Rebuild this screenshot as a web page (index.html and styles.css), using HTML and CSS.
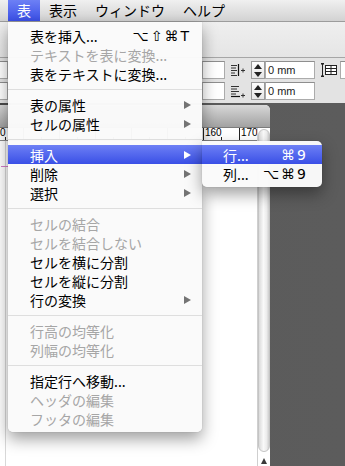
FILE: index.html
```html
<!DOCTYPE html>
<html lang="ja">
<head>
    <meta charset="UTF-8">
    <title>表メニュー</title>
    <link rel="stylesheet" href="styles.css">
</head>
<body>
    <div class="screen">
        <div class="menubar">
            <div class="menubar-item active">表</div>
            <div class="menubar-item">表示</div>
            <div class="menubar-item">ウィンドウ</div>
            <div class="menubar-item">ヘルプ</div>
        </div>

        <div class="toolbar"></div>

        <div class="control-panel">
            <div class="cp-row">
                <div class="field field-cut"></div>
                <div class="field field-small"></div>
                <svg class="cp-icon" width="16" height="14" viewBox="0 0 16 14">
                    <path d="M1 2.5h6M1 5h5M1 7.5h6M1 10h4M1 12.5h6" stroke="#333" stroke-width="1"/>
                    <path d="M8.5 1v12" stroke="#111" stroke-width="1.2"/>
                    <path d="M11 7.5h4M13 5.5v4" stroke="#333" stroke-width="1"/>
                </svg>
                <div class="spinner"><span class="up"></span><span class="down"></span></div>
                <div class="field field-value">0 mm</div>
                <svg class="cp-icon table-icon" width="17" height="16" viewBox="0 0 17 16">
                    <path d="M2.5 1v14M1 1.5h3M1 14.5h3" stroke="#222" stroke-width="1"/>
                    <path d="M1.5 3l1 -1.5l1 1.5M1.5 13l1 1.5l1 -1.5" stroke="#222" stroke-width="0.8" fill="none"/>
                    <rect x="5.5" y="3.5" width="11" height="9" fill="#fff" stroke="#222"/>
                    <path d="M5.5 6.5h11M5.5 9.5h11M11 3.5v9" stroke="#222" stroke-width="1"/>
                </svg>
                <div class="field field-edge"></div>
            </div>
            <div class="cp-row">
                <div class="field field-cut"></div>
                <div class="field field-small"></div>
                <svg class="cp-icon" width="16" height="14" viewBox="0 0 16 14">
                    <path d="M1 2.5h8M1 5h6M1 7.5h8M1 10h5" stroke="#333" stroke-width="1"/>
                    <path d="M1 12.5h9" stroke="#111" stroke-width="1.2"/>
                    <path d="M11 11.5h4M13 9.5v4" stroke="#333" stroke-width="1"/>
                </svg>
                <div class="spinner"><span class="up"></span><span class="down"></span></div>
                <div class="field field-value">0 mm</div>
            </div>
        </div>

        <div class="workspace">
            <div class="doc-window">
                <div class="doc-title"></div>
                <div class="doc-main">
                    <div class="doc-content">
                        <!-- labels 110-150 sit under the open menu -->
                        <div class="ruler">
                            <div class="ruler-cell">100</div>
                            <div class="ruler-cell"></div>
                            <div class="ruler-cell"></div>
                            <div class="ruler-cell"></div>
                            <div class="ruler-cell"></div>
                            <div class="ruler-cell"></div>
                            <div class="ruler-cell">160</div>
                            <div class="ruler-cell">170</div>
                        </div>
                        <div class="page">
                            <div class="guide"></div>
                        </div>
                    </div>
                    <div class="vscroll">
                        <div class="thumb"></div>
                        <div class="arrow-up"></div>
                    </div>
                </div>
            </div>
            <div class="pasteboard"></div>
        </div>

        <!-- 表 menu -->
        <div class="menu main-menu">
            <div class="menu-item"><span class="label">表を挿入...</span><span class="shortcut">⌥⇧⌘T</span></div>
            <div class="menu-item disabled"><span class="label">テキストを表に変換...</span></div>
            <div class="menu-item"><span class="label">表をテキストに変換...</span></div>
            <div class="separator"></div>
            <div class="menu-item"><span class="label">表の属性</span><span class="arrow"></span></div>
            <div class="menu-item"><span class="label">セルの属性</span><span class="arrow"></span></div>
            <div class="separator"></div>
            <div class="menu-item selected"><span class="label">挿入</span><span class="arrow"></span></div>
            <div class="menu-item"><span class="label">削除</span><span class="arrow"></span></div>
            <div class="menu-item"><span class="label">選択</span><span class="arrow"></span></div>
            <div class="separator"></div>
            <div class="menu-item disabled"><span class="label">セルの結合</span></div>
            <div class="menu-item disabled"><span class="label">セルを結合しない</span></div>
            <div class="menu-item"><span class="label">セルを横に分割</span></div>
            <div class="menu-item"><span class="label">セルを縦に分割</span></div>
            <div class="menu-item"><span class="label">行の変換</span><span class="arrow"></span></div>
            <div class="separator"></div>
            <div class="menu-item disabled"><span class="label">行高の均等化</span></div>
            <div class="menu-item disabled"><span class="label">列幅の均等化</span></div>
            <div class="separator"></div>
            <div class="menu-item"><span class="label">指定行へ移動...</span></div>
            <div class="menu-item disabled"><span class="label">ヘッダの編集</span></div>
            <div class="menu-item disabled"><span class="label">フッタの編集</span></div>
        </div>

        <!-- 挿入 submenu -->
        <div class="menu sub-menu">
            <div class="menu-item selected"><span class="label">行...</span><span class="shortcut">⌘9</span></div>
            <div class="menu-item"><span class="label">列...</span><span class="shortcut">⌥⌘9</span></div>
        </div>
    </div>
</body>
</html>
```

FILE: styles.css
```css
* {
    margin: 0;
    padding: 0;
    box-sizing: border-box;
}

body {
    font-family: "Noto Sans CJK JP", "Noto Sans", sans-serif;
    font-size: 14px;
    color: #000;
    background: #5a5a5a;
}

.screen {
    position: relative;
    width: 345px;
    height: 466px;
    overflow: hidden;
    display: flex;
    flex-direction: column;
}

/* menu bar */
.menubar {
    height: 22px;
    display: flex;
    padding-left: 8px;
    background: linear-gradient(#f0f0f0, #d2d2d2);
    border-bottom: 1px solid #9c9c9c;
}

.menubar-item {
    height: 21px;
    line-height: 21px;
    padding: 0 9px;
}

.menubar-item.active {
    background: linear-gradient(#6d80f5, #3a4fe6);
    color: #fff;
}

/* window chrome */
.toolbar {
    height: 35px;
    background: linear-gradient(#efefef, #e5e5e5);
}

.control-panel {
    height: 46px;
    border-top: 1px solid #a6a6a6;
    background: #e3e3e3;
    padding: 3px 0;
    display: flex;
    flex-direction: column;
    gap: 3px;
}

.cp-row {
    height: 18px;
    display: flex;
    align-items: center;
}

.field {
    height: 18px;
    background: #fff;
    border: 1px solid #ababab;
    border-top-color: #8e8e8e;
    font: 11px "Liberation Sans", sans-serif;
    line-height: 16px;
    padding-left: 2px;
    flex: none;
}

.field-cut {
    width: 8px;
    border-left: none;
}

.field-small {
    width: 23px;
    margin-left: 194px;
}

.field-value {
    width: 50px;
    color: #222;
}

.field-edge {
    width: 20px;
    margin-left: 3px;
}

.cp-icon {
    flex: none;
    margin-left: 5px;
}

.spinner {
    width: 14px;
    height: 18px;
    margin-left: 5px;
    flex: none;
    background: linear-gradient(#fdfdfd, #e6e6e6);
    border: 1px solid #9a9a9a;
    display: flex;
    flex-direction: column;
    align-items: center;
    justify-content: center;
    gap: 3px;
}

.spinner .up {
    border-left: 4px solid transparent;
    border-right: 4px solid transparent;
    border-bottom: 5px solid #222;
}

.spinner .down {
    border-left: 4px solid transparent;
    border-right: 4px solid transparent;
    border-top: 5px solid #222;
}

/* document area */
.workspace {
    flex: 1;
    display: flex;
    background: linear-gradient(to right, #464646, #5a5a5a 14px, #5c5c5c);
}

.doc-window {
    width: 270px;
    margin-top: 2px;
    display: flex;
    flex-direction: column;
    border-top-right-radius: 5px;
    overflow: hidden;
    background: #fff;
}

.doc-title {
    height: 23px;
    background: linear-gradient(#d8d8d8, #a2a2a2);
    border-bottom: 1px solid #7c7c7c;
}

.doc-main {
    flex: 1;
    display: flex;
}

.doc-content {
    flex: 1;
    display: flex;
    flex-direction: column;
    overflow: hidden;
}

.ruler {
    height: 13px;
    display: flex;
    margin-left: -13px;
    background: #fff;
    border-bottom: 1px solid #8a8a8a;
}

.ruler-cell {
    position: relative;
    flex: none;
    width: 36px;
    border-left: 1px solid #222;
    font: 10px "Liberation Sans", sans-serif;
    line-height: 10px;
    padding-left: 1px;
}

.ruler-cell::after {
    content: "";
    position: absolute;
    left: 17px;
    bottom: 0;
    width: 1px;
    height: 3px;
    background: #222;
}

.page {
    flex: 1;
    background: #fff;
    border-left: 1px solid #d8d8d8;
    margin-left: 5px;
}

.guide {
    height: 1px;
    margin-top: 25px;
    margin-left: -5px;
    background: #d47fc9;
}

.vscroll {
    width: 13px;
    display: flex;
    flex-direction: column;
    align-items: center;
    background: #fff;
    border-left: 1px solid #cfcfcf;
}

.thumb {
    width: 12px;
    height: 323px;
    margin-top: 1px;
    border-radius: 6px;
    border: 1px solid #c4c4c4;
    background: linear-gradient(to right, #dadada, #f9f9f9 45%, #ececec 75%, #cdcdcd);
}

.arrow-up {
    margin-top: 6px;
    border-left: 3px solid transparent;
    border-right: 3px solid transparent;
    border-bottom: 6px solid #3a3a3a;
}

.pasteboard {
    flex: 1;
}

/* menus */
.menu {
    position: absolute;
    padding: 4px 0;
    background: rgba(250, 250, 250, 0.98);
    box-shadow: 0 7px 16px rgba(0, 0, 0, 0.38), 0 0 1px rgba(0, 0, 0, 0.3);
}

.main-menu {
    left: 8px;
    top: 22px;
    width: 194px;
    border-radius: 0 0 5px 5px;
}

.sub-menu {
    left: 202px;
    top: 141px;
    width: 120px;
    border-radius: 0 5px 5px 5px;
}

.menu-item {
    height: 19px;
    display: flex;
    align-items: center;
    padding: 0 11px 0 22px;
    white-space: nowrap;
}

.sub-menu .menu-item {
    padding: 0 14px 0 21px;
}

.menu-item .label {
    flex: 1;
}

.menu-item.disabled {
    color: #a6a6a6;
}

.menu-item.selected {
    background: linear-gradient(#6d80f5, #3a4fe6);
    color: #fff;
}

.shortcut {
    font-family: "DejaVu Sans", sans-serif;
    font-size: 14px;
    letter-spacing: 2px;
}

.arrow {
    width: 0;
    height: 0;
    border-top: 4px solid transparent;
    border-bottom: 4px solid transparent;
    border-left: 7px solid #747474;
}

.menu-item.selected .arrow {
    border-left-color: #fff;
}

.separator {
    height: 12px;
    display: flex;
    align-items: center;
}

.separator::before {
    content: "";
    flex: 1;
    height: 1px;
    background: #dedede;
}
```
